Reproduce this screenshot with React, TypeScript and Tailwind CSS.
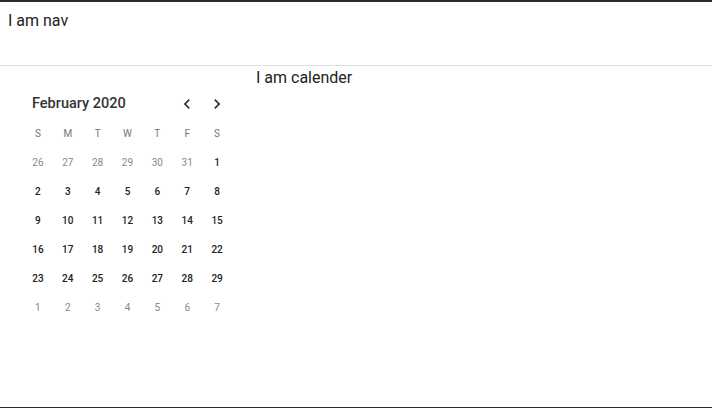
import React from 'react';

const weekDays = ['S', 'M', 'T', 'W', 'T', 'F', 'S'];

// Feb 2020 starts on a Saturday; fill with Jan and Mar days
const buildDays = () => {
  const cells: { day: number; inMonth: boolean }[] = [];
  for (let d = 26; d <= 31; d++) cells.push({ day: d, inMonth: false });
  for (let d = 1; d <= 29; d++) cells.push({ day: d, inMonth: true });
  for (let d = 1; d <= 7; d++) cells.push({ day: d, inMonth: false });
  return cells;
};

const Chevron: React.FC<{ dir: 'left' | 'right' }> = ({ dir }) => (
  <svg width="20" height="20" viewBox="0 0 24 24" fill="#333">
    {dir === 'left' ? (
      <path d="M15.41 7.41L14 6l-6 6 6 6 1.41-1.41L10.83 12z" />
    ) : (
      <path d="M10 6L8.59 7.41 13.17 12l-4.58 4.59L10 18l6-6z" />
    )}
  </svg>
);

const Calendar: React.FC = () => {
  const days = buildDays();
  return (
    <div className="ml-[23px] w-[209px]">
      <div className="flex h-[28px] items-center justify-between">
        <span className="pl-[9px] text-[14.5px] font-medium text-[#333]">February 2020</span>
        <div className="flex">
          <button className="flex h-[28px] w-[30px] items-center justify-center">
            <Chevron dir="left" />
          </button>
          <button className="flex h-[28px] w-[30px] items-center justify-center">
            <Chevron dir="right" />
          </button>
        </div>
      </div>
      <div className="grid grid-cols-7 pt-[1px]">
        {weekDays.map((d, i) => (
          <div key={i} className="flex h-[29px] items-center justify-center text-[10px] text-[#757575]">
            {d}
          </div>
        ))}
        {days.map((c, i) => (
          <div
            key={i}
            className={
              c.inMonth
                ? 'flex h-[29px] items-center justify-center text-[10px] font-medium text-[#222]'
                : 'flex h-[29px] items-center justify-center text-[10px] text-[#888]'
            }
          >
            {c.day}
          </div>
        ))}
      </div>
    </div>
  );
};

const App: React.FC = () => {
  return (
    <div
      className="h-[408px] w-full border-t-2 border-b border-[#2b2b2b] bg-white text-[16px] leading-6 text-[#222]"
      style={{ fontFamily: 'Roboto, "Noto Sans", sans-serif' }}
    >
      {/* Nav */}
      <div className="h-[64px] border-b border-[#dcdcdc] px-2 pt-[7px]">I am nav</div>

      {/* Calendar section */}
      <div className="pl-[256px]">I am calender</div>
      <Calendar />
    </div>
  );
};

export default App;
